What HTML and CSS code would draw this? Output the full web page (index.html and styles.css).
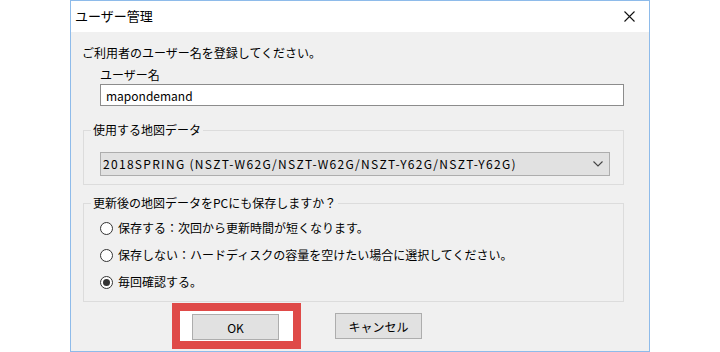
FILE: index.html
```html
<!DOCTYPE html>
<html lang="ja">
<head>
    <meta charset="UTF-8">
    <meta name="viewport" content="width=device-width, initial-scale=1.0">
    <title>ユーザー管理</title>
    <link rel="stylesheet" href="styles.css">
</head>
<body>
    <div class="dialog">
        <div class="titlebar">
            <span class="title">ユーザー管理</span>
            <svg class="close" width="11" height="11" viewBox="0 0 11 11">
                <path d="M0.5 0.5 L10.5 10.5 M10.5 0.5 L0.5 10.5" stroke="#111" stroke-width="1.1" fill="none"/>
            </svg>
        </div>

        <div class="content">
            <p class="prompt">ご利用者のユーザー名を登録してください。</p>

            <div class="input-group">
                <label for="username">ユーザー名</label>
                <input type="text" id="username" value="mapondemand">
            </div>

            <fieldset class="group group-map">
                <legend>使用する地図データ</legend>
                <div class="combo">
                    <span class="combo-text">2018SPRING (NSZT-W62G/NSZT-W62G/NSZT-Y62G/NSZT-Y62G)</span>
                    <svg class="chevron" width="10" height="6" viewBox="0 0 10 6">
                        <path d="M0.5 0.5 L5 5 L9.5 0.5" stroke="#444" stroke-width="1.1" fill="none"/>
                    </svg>
                </div>
            </fieldset>

            <fieldset class="group group-save">
                <legend>更新後の地図データをPCにも保存しますか？</legend>
                <div class="radio-row">
                    <span class="radio"></span>
                    <span>保存する：次回から更新時間が短くなります。</span>
                </div>
                <div class="radio-row">
                    <span class="radio"></span>
                    <span>保存しない：ハードディスクの容量を空けたい場合に選択してください。</span>
                </div>
                <div class="radio-row">
                    <span class="radio checked"></span>
                    <span>毎回確認する。</span>
                </div>
            </fieldset>

            <div class="buttons">
                <div class="highlight">
                    <button class="btn">OK</button>
                </div>
                <button class="btn cancel-btn">キャンセル</button>
            </div>
        </div>
    </div>
</body>
</html>
```

FILE: styles.css
```css
body {
    margin: 0;
    padding: 0;
    background-color: #fff;
    font-family: "Noto Sans CJK JP", "Noto Sans", sans-serif;
    font-size: 12px;
    line-height: 16px;
    color: #000;
}

.dialog {
    width: 578px;
    height: 350px;
    margin-left: 70px;
    border: 1px solid #8ebbea;
    background-color: #f0f0f0;
}

.titlebar {
    height: 31px;
    display: flex;
    align-items: center;
    justify-content: space-between;
    padding: 0 14px 0 4px;
    background-color: #fff;
}

.title {
    font-size: 13px;
    margin-top: -1px;
}

.content {
    padding: 0 25px 0 11px;
}

.prompt {
    margin: 13px 0 0 0;
}

.input-group {
    margin: 6px 0 0 18px;
}

.input-group label {
    display: block;
    margin-bottom: 1px;
}

.input-group input {
    display: block;
    width: 100%;
    height: 22px;
    margin: 0;
    padding: 0 5px;
    border: 1px solid #8c8c8c;
    box-sizing: border-box;
    font-family: inherit;
    font-size: 12px;
    color: #000;
    background-color: #fff;
    outline: none;
}

.group {
    margin: 0 0 0 1px;
    padding: 0;
    border: 1px solid #dcdcdc;
    min-width: 0;
}

.group legend {
    margin-left: 7px;
    padding: 0 2px;
    line-height: 16px;
}

.group-map {
    margin-top: 16px;
    padding-bottom: 8px;
}

.group-save {
    margin-top: 10px;
    padding-bottom: 11px;
}

.combo {
    display: flex;
    align-items: center;
    justify-content: space-between;
    height: 24px;
    margin: 14px 13px 0 16px;
    padding: 0 6px 0 2px;
    border: 1px solid #adadad;
    box-sizing: border-box;
    background-color: #e1e1e1;
}

.combo-text {
    letter-spacing: 1.3px;
}

.radio-row {
    display: flex;
    align-items: center;
    gap: 5px;
    height: 16px;
    margin: 11px 0 0 16px;
}

.radio-row:first-of-type {
    margin-top: 9px;
}

.radio {
    width: 13px;
    height: 13px;
    border: 1px solid #333;
    border-radius: 50%;
    box-sizing: border-box;
    background-color: #fff;
    display: flex;
    align-items: center;
    justify-content: center;
}

.radio.checked::after {
    content: "";
    width: 7px;
    height: 7px;
    border-radius: 50%;
    background-color: #333;
}

.buttons {
    display: flex;
    align-items: flex-start;
    gap: 34px;
    margin: 1px 0 0 90px;
}

.highlight {
    border: 8px solid #df4a48;
    background-color: #fff;
    padding: 3px 14px 1px 12px;
}

.btn {
    display: block;
    width: 87px;
    height: 26px;
    margin: 0;
    padding: 0;
    border: 1px solid #adadad;
    background-color: #e1e1e1;
    font-family: inherit;
    font-size: 12px;
    color: #000;
}

.cancel-btn {
    margin-top: 10px;
}
```
